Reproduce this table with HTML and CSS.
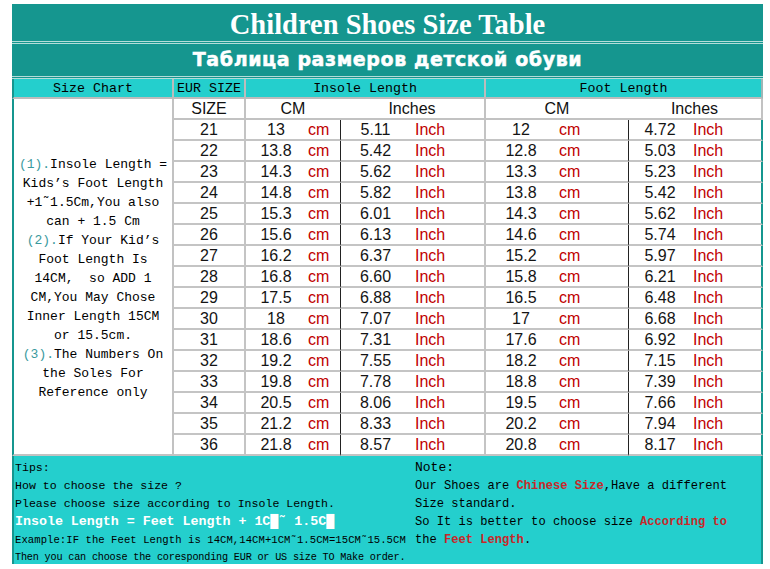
FILE: index.html
```html
<!DOCTYPE html>
<html>
<head>
<meta charset="utf-8">
<title>Children Shoes Size Table</title>
<link rel="stylesheet" href="styles.css">
</head>
<body>
<div class="sheet">
  <div class="title">Children Shoes Size Table</div>
  <div class="sep"></div>
  <div class="subtitle">Таблица размеров детской обуви</div>
  <div class="sep"></div>

  <div class="grid">
    <div class="h h-left">Size Chart</div>
    <div class="h h-eur">EUR SIZE</div>
    <div class="h h-grp">Insole Length</div>
    <div class="h h-grp h-last">Foot Length</div>

    <div class="left">
      <div><span class="num">(1).</span>Insole Length =</div>
      <div>Kids’s Foot Length</div>
      <div>+1˜1.5Cm,You also</div>
      <div>can + 1.5 Cm</div>
      <div><span class="num">(2).</span>If Your Kid’s</div>
      <div>Foot Length Is</div>
      <div>14CM,&nbsp; so ADD 1</div>
      <div>CM,You May Chose</div>
      <div>Inner Length 15CM</div>
      <div>or 15.5cm.</div>
      <div><span class="num">(3).</span>The Numbers On</div>
      <div>the Soles For</div>
      <div>Reference only</div>
    </div>

    <div class="s s-eur">SIZE</div>
    <div class="s s-two">CM</div>
    <div class="s s-two s-gr">Inches</div>
    <div class="s s-two">CM</div>
    <div class="s s-two s-last">Inches</div>

    <div class="c eur">21</div><div class="c n">13</div><div class="c u u1">cm</div><div class="c n bl">5.11</div><div class="c u u2 gr">Inch</div><div class="c n">12</div><div class="c u u3">cm</div><div class="c n bl">4.72</div><div class="c u u4 end">Inch</div>
    <div class="c eur">22</div><div class="c n">13.8</div><div class="c u u1">cm</div><div class="c n bl">5.42</div><div class="c u u2 gr">Inch</div><div class="c n">12.8</div><div class="c u u3">cm</div><div class="c n bl">5.03</div><div class="c u u4 end">Inch</div>
    <div class="c eur">23</div><div class="c n">14.3</div><div class="c u u1">cm</div><div class="c n bl">5.62</div><div class="c u u2 gr">Inch</div><div class="c n">13.3</div><div class="c u u3">cm</div><div class="c n bl">5.23</div><div class="c u u4 end">Inch</div>
    <div class="c eur">24</div><div class="c n">14.8</div><div class="c u u1">cm</div><div class="c n bl">5.82</div><div class="c u u2 gr">Inch</div><div class="c n">13.8</div><div class="c u u3">cm</div><div class="c n bl">5.42</div><div class="c u u4 end">Inch</div>
    <div class="c eur">25</div><div class="c n">15.3</div><div class="c u u1">cm</div><div class="c n bl">6.01</div><div class="c u u2 gr">Inch</div><div class="c n">14.3</div><div class="c u u3">cm</div><div class="c n bl">5.62</div><div class="c u u4 end">Inch</div>
    <div class="c eur">26</div><div class="c n">15.6</div><div class="c u u1">cm</div><div class="c n bl">6.13</div><div class="c u u2 gr">Inch</div><div class="c n">14.6</div><div class="c u u3">cm</div><div class="c n bl">5.74</div><div class="c u u4 end">Inch</div>
    <div class="c eur">27</div><div class="c n">16.2</div><div class="c u u1">cm</div><div class="c n bl">6.37</div><div class="c u u2 gr">Inch</div><div class="c n">15.2</div><div class="c u u3">cm</div><div class="c n bl">5.97</div><div class="c u u4 end">Inch</div>
    <div class="c eur">28</div><div class="c n">16.8</div><div class="c u u1">cm</div><div class="c n bl">6.60</div><div class="c u u2 gr">Inch</div><div class="c n">15.8</div><div class="c u u3">cm</div><div class="c n bl">6.21</div><div class="c u u4 end">Inch</div>
    <div class="c eur">29</div><div class="c n">17.5</div><div class="c u u1">cm</div><div class="c n bl">6.88</div><div class="c u u2 gr">Inch</div><div class="c n">16.5</div><div class="c u u3">cm</div><div class="c n bl">6.48</div><div class="c u u4 end">Inch</div>
    <div class="c eur">30</div><div class="c n">18</div><div class="c u u1">cm</div><div class="c n bl">7.07</div><div class="c u u2 gr">Inch</div><div class="c n">17</div><div class="c u u3">cm</div><div class="c n bl">6.68</div><div class="c u u4 end">Inch</div>
    <div class="c eur">31</div><div class="c n">18.6</div><div class="c u u1">cm</div><div class="c n bl">7.31</div><div class="c u u2 gr">Inch</div><div class="c n">17.6</div><div class="c u u3">cm</div><div class="c n bl">6.92</div><div class="c u u4 end">Inch</div>
    <div class="c eur">32</div><div class="c n">19.2</div><div class="c u u1">cm</div><div class="c n bl">7.55</div><div class="c u u2 gr">Inch</div><div class="c n">18.2</div><div class="c u u3">cm</div><div class="c n bl">7.15</div><div class="c u u4 end">Inch</div>
    <div class="c eur">33</div><div class="c n">19.8</div><div class="c u u1">cm</div><div class="c n bl">7.78</div><div class="c u u2 gr">Inch</div><div class="c n">18.8</div><div class="c u u3">cm</div><div class="c n bl">7.39</div><div class="c u u4 end">Inch</div>
    <div class="c eur">34</div><div class="c n">20.5</div><div class="c u u1">cm</div><div class="c n bl">8.06</div><div class="c u u2 gr">Inch</div><div class="c n">19.5</div><div class="c u u3">cm</div><div class="c n bl">7.66</div><div class="c u u4 end">Inch</div>
    <div class="c eur">35</div><div class="c n">21.2</div><div class="c u u1">cm</div><div class="c n bl">8.33</div><div class="c u u2 gr">Inch</div><div class="c n">20.2</div><div class="c u u3">cm</div><div class="c n bl">7.94</div><div class="c u u4 end">Inch</div>
    <div class="c eur">36</div><div class="c n">21.8</div><div class="c u u1">cm</div><div class="c n bl">8.57</div><div class="c u u2 gr">Inch</div><div class="c n">20.8</div><div class="c u u3">cm</div><div class="c n bl">8.17</div><div class="c u u4 end">Inch</div>
  </div>

  <div class="notes">
    <div class="tips">
      <div class="t-line">Tips:</div>
      <div class="t-line">How to choose the size ?</div>
      <div class="t-line">Please choose size according to Insole Length.</div>
      <div class="t-line t-bold">Insole Length = Feet Length + 1C█˜ 1.5C█</div>
      <div class="t-line t-small">Example:IF the Feet Length is 14CM,14CM+1CM˜1.5CM=15CM˜15.5CM</div>
      <div class="t-line t-tiny">Then you can choose the coresponding EUR or US size TO Make order.</div>
    </div>
    <div class="note">
      <div class="n-head">Note:</div>
      <div>Our Shoes are <b class="red">Chinese Size</b>,Have a different</div>
      <div>Size standard.</div>
      <div>So It is better to choose size <b class="red">According to</b></div>
      <div>the <b class="red">Feet Length</b>.</div>
    </div>
  </div>
</div>
</body>
</html>
```

FILE: styles.css
```css
* { box-sizing: border-box; }

body {
  margin: 0;
  background: #ffffff;
}

.sheet {
  width: 751px;
  margin: 4px 0 0 12px;
}

.title {
  height: 37px;
  padding-top: 4px;
  background: #15968f;
  color: #ffffff;
  font-family: "Liberation Serif", serif;
  font-weight: bold;
  font-size: 28.5px;
  display: flex;
  align-items: center;
  justify-content: center;
}

.sep {
  height: 3px;
  background: #15968f;
  border-top: 1px solid #b3ddd9;
  border-bottom: 1px solid #b3ddd9;
}

.subtitle {
  height: 32px;
  padding-bottom: 3px;
  background: #15968f;
  color: #ffffff;
  font-family: "DejaVu Sans", sans-serif;
  font-weight: bold;
  font-size: 19px;
  letter-spacing: 0.6px;
  -webkit-text-stroke: 0.5px #ffffff;
  display: flex;
  align-items: center;
  justify-content: center;
}

.grid {
  display: grid;
  grid-template-columns: 162px 72px 60px 34px 70px 76px 70px 72px 63px 72px;
  grid-template-rows: 20px repeat(17, 21px);
}

/* header row */
.h {
  background: #24cfcd;
  border-bottom: 2px solid #bcbcbc;
  border-right: 2px solid #bcbcbc;
  font-family: "Liberation Mono", monospace;
  font-size: 13.3px;
  color: #000000;
  display: flex;
  align-items: center;
  justify-content: center;
}
.h-left { border-left: 2px solid #15968f; }
.h-grp { grid-column: span 4; }
.h-last { border-right: 2px solid #9fb5b5; }

/* left explanatory column */
.left {
  grid-column: 1;
  grid-row: 2 / span 17;
  background: #ffffff;
  border-left: 2px solid #15968f;
  border-right: 2px solid #c2c2c2;
  border-bottom: 2px solid #c2c2c2;
  padding-top: 4px;
  display: flex;
  flex-direction: column;
  justify-content: center;
  align-items: center;
  font-family: "Liberation Mono", monospace;
  font-size: 13px;
  line-height: 19px;
  color: #000000;
  white-space: nowrap;
}
.num { color: #3a9a9e; }

/* sub-header row */
.s {
  background: #ffffff;
  border-bottom: 2px solid #c2c2c2;
  font-family: "Liberation Sans", sans-serif;
  font-size: 16px;
  color: #111111;
  display: flex;
  align-items: center;
  justify-content: center;
}
.s-eur { border-right: 2px solid #c2c2c2; }
.s-two { grid-column: span 2; }
.s-gr { border-right: 2px solid #c2c2c2; }
.s-last { border-right: 2px solid #c2c2c2; }

/* data cells */
.c {
  background: #ffffff;
  border-bottom: 2px solid #c4c4c4;
  font-family: "Liberation Sans", sans-serif;
  font-size: 16px;
  color: #141414;
  display: flex;
  align-items: center;
  white-space: nowrap;
}
.eur {
  justify-content: center;
  border-right: 2px solid #c4c4c4;
}
.n { justify-content: center; }
.bl { border-left: 1px solid #222222; }
.u { color: #c00000; }
.u1 { padding-left: 2px; }
.u2 { padding-left: 5px; }
.u3 { padding-left: 3px; }
.u4 { padding-left: 2px; }
.gr { border-right: 2px solid #c4c4c4; }
.end { border-right: 2px solid #15968f; }

/* bottom notes */
.notes {
  display: grid;
  grid-template-columns: 396px 351px;
  height: 108px;
  background: #24cfcd;
  border-left: 2px solid #15968f;
  border-right: 2px solid #15968f;
  font-family: "Liberation Mono", monospace;
  color: #000000;
}

.tips {
  padding: 3px 0 0 1px;
  white-space: nowrap;
}
.t-line {
  font-size: 11.6px;
  line-height: 18px;
}
.t-bold {
  font-size: 13.3px;
  font-weight: bold;
  color: #ffffff;
}
.t-small {
  font-size: 10.6px;
  letter-spacing: 0.05px;
}
.t-tiny {
  font-size: 10.2px;
  letter-spacing: -0.2px;
}

.note {
  padding: 3px 0 0 5px;
  font-size: 12.1px;
  line-height: 18px;
  white-space: nowrap;
}
.n-head { font-size: 13px; }
.red {
  color: #c8282a;
  font-weight: bold;
}
```
